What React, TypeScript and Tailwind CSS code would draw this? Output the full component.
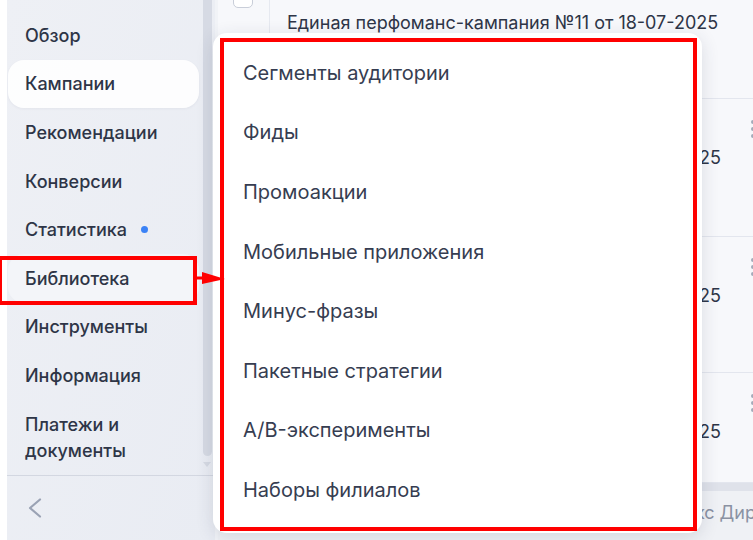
const navItems = [
  'Обзор',
  'Кампании',
  'Рекомендации',
  'Конверсии',
  'Статистика',
  'Библиотека',
  'Инструменты',
  'Информация',
];

const libraryItems = [
  'Сегменты аудитории',
  'Фиды',
  'Промоакции',
  'Мобильные приложения',
  'Минус-фразы',
  'Пакетные стратегии',
  'A/B-эксперименты',
  'Наборы филиалов',
];

const rows = [
  { name: 'Единая перфоманс-кампания №12 от 18-07-2025', height: 'h-[138px]' },
  { name: 'Единая перфоманс-кампания №13 от 18-07-2025', height: 'h-[136px]' },
  { name: 'Единая перфоманс-кампания №14 от 18-07-2025', height: 'h-[110px]' },
];

function Sidebar() {
  return (
    <aside className="relative flex h-full w-[208px] shrink-0 flex-col bg-gradient-to-br from-[#eef0f5] to-[#e9ecf3]">
      <div className="flex flex-1 overflow-hidden">
        <nav className="flex flex-1 flex-col pt-[11px] pl-[1px] pr-[4px]">
          {navItems.map((item) => (
            <div
              key={item}
              className={
                'flex h-[48.6px] items-center rounded-2xl pl-[17px] text-[18px] font-medium text-[#2e3547] ' +
                (item === 'Кампании'
                  ? 'bg-white/90 shadow-[0_1px_3px_rgba(30,40,70,0.05)]'
                  : item === 'Библиотека'
                    ? 'bg-[#f3f5f9]'
                    : '')
              }
            >
              {item}
              {item === 'Статистика' && (
                <span className="ml-[14px] h-[7px] w-[7px] rounded-full bg-[#3b82f6]" />
              )}
            </div>
          ))}
          <div className="pt-[12px] pl-[17px] text-[18px] font-medium leading-[26px] text-[#2e3547]">
            Платежи и
            <br />
            документы
          </div>
        </nav>
        {/* vertical scrollbar */}
        <div className="flex w-[12px] flex-col items-start">
          <div className="h-[456px] w-[9px] rounded-b-full bg-[#d6dae4]" />
          <div className="mt-[6px] h-0 w-0 border-x-[4.5px] border-t-[5px] border-x-transparent border-t-[#d6dae4]" />
        </div>
      </div>
      <div className="h-[65px] border-t border-[#d3d7e1]">
        <div className="flex h-full items-center pl-[21px]">
          <svg width="14" height="20" viewBox="0 0 14 20" fill="none">
            <polyline points="12,1.5 2,10 12,18.5" stroke="#9aa2b4" strokeWidth="2.2" strokeLinecap="round" strokeLinejoin="round" />
          </svg>
        </div>
      </div>
    </aside>
  );
}

function Dots() {
  return (
    <div className="ml-[30px] flex w-[8px] shrink-0 flex-col gap-[3px]">
      <span className="h-[4px] w-[4px] rounded-full bg-[#a3aab9]" />
      <span className="h-[4px] w-[4px] rounded-full bg-[#a3aab9]" />
      <span className="h-[4px] w-[4px] rounded-full bg-[#a3aab9]" />
    </div>
  );
}

function MainContent() {
  return (
    <main className="h-full flex-1 overflow-hidden border-l-[3px] border-[#f1f3f7] bg-[#f4f5f9]">
      <div className="flex h-full w-[541px] flex-col">
        <div className="h-[99px] border-b border-[#e3e6ee] bg-[#f7f8fb]">
          <div className="flex">
            <div className="h-[98px] w-[52px] border-r border-[#e6e9f0]">
              <div className="-mt-[12px] ml-[15px] h-[20px] w-[20px] rounded-[5px] border border-[#c9ced9] bg-white" />
            </div>
            <div className="pl-[17px]">
              <div className="-mt-[16px] h-[22px] text-[15px] text-[#6b7386]">№ 704210000</div>
              <div className="mt-[5px] text-[18px] leading-[24px] text-[#2e3547]">
                Единая перфоманс-кампания №11 от 18-07-2025
              </div>
            </div>
          </div>
        </div>
        {rows.map((row) => (
          <div key={row.name} className={'flex shrink-0 border-b border-[#e3e6ee] bg-[#f7f8fb] ' + row.height}>
            <div className="w-[52px] shrink-0 border-r border-[#e6e9f0]" />
            <div className="flex min-w-0 flex-1 justify-end overflow-hidden">
              <span className="mt-[47px] whitespace-nowrap text-[18px] leading-[24px] text-[#2e3547]">{row.name}</span>
            </div>
            <div className="pt-[21px]">
              <Dots />
            </div>
          </div>
        ))}
        <div className="h-[8px] shrink-0 bg-[#dfe2ea]" />
        <div className="flex flex-1 justify-end bg-[#eff1f5] pt-[10px] pr-[3px]">
          <span className="whitespace-nowrap text-[18px] leading-[24px] text-[#8a92a3]">© 2025 ООО «Яндекс Дир</span>
        </div>
      </div>
    </main>
  );
}

export default function App() {
  return (
    <div className="relative flex h-[540px] w-[753px] overflow-hidden bg-white font-['Inter',sans-serif]">
      <div className="w-[7px] shrink-0 bg-white" />
      <Sidebar />
      <MainContent />

      {/* library dropdown */}
      <div className="absolute left-[213px] top-[33px] h-[500px] w-[489px] rounded-[14px] bg-white shadow-[0_4px_18px_rgba(40,50,80,0.14)]">
        <ul className="flex flex-col pt-[10px] pl-[30px]">
          {libraryItems.map((item) => (
            <li key={item} className="flex h-[59.6px] items-center text-[20px] text-[#363d51]">
              {item}
            </li>
          ))}
        </ul>
      </div>

      {/* annotation: red frames and arrow */}
      <div className="pointer-events-none absolute left-[220px] top-[38px] h-[493px] w-[477px] border-[4px] border-[#ff0000]" />
      <div className="pointer-events-none absolute left-[-2px] top-[256px] h-[49px] w-[199px] border-[4px] border-[#ff0000]" />
      <svg className="pointer-events-none absolute left-[196px] top-[268px]" width="30" height="20" viewBox="0 0 30 20">
        <line x1="0" y1="10" x2="12" y2="10" stroke="#ff0000" strokeWidth="3" />
        <polygon points="6,4 29,11 6,16" fill="#ff0000" />
      </svg>
    </div>
  );
}
